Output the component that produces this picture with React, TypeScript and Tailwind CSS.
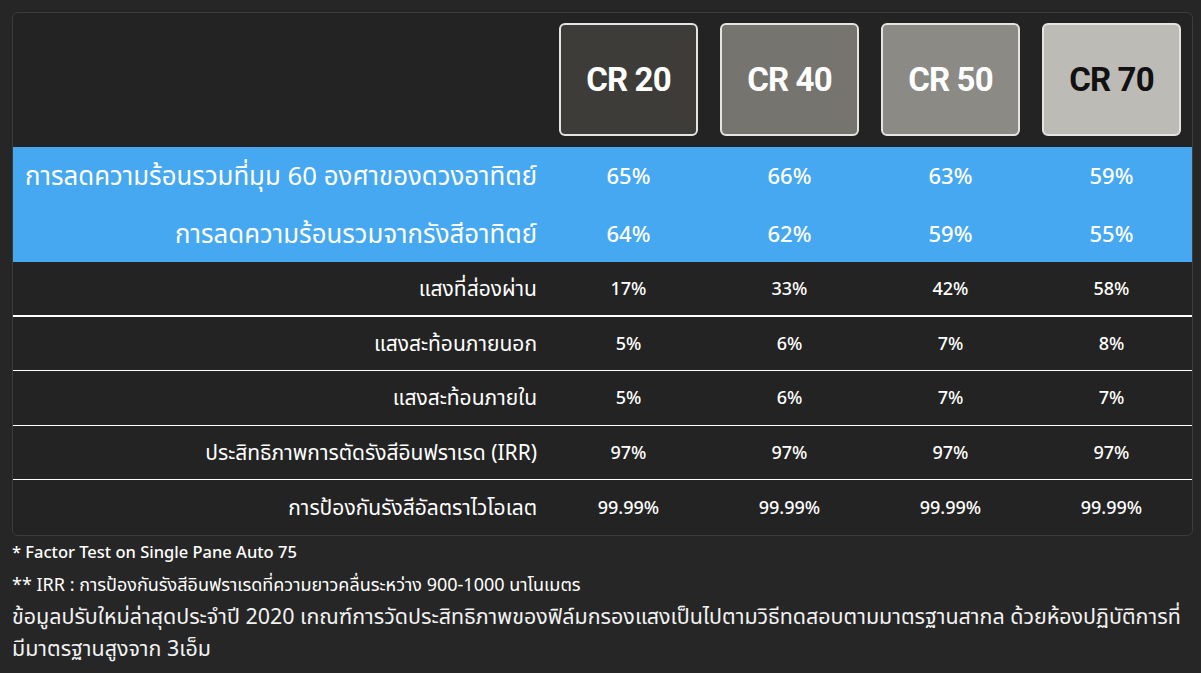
const products = [
  { name: "CR 20", bg: "bg-[#3d3c39]", text: "text-white" },
  { name: "CR 40", bg: "bg-[#75746f]", text: "text-white" },
  { name: "CR 50", bg: "bg-[#8b8a85]", text: "text-white" },
  { name: "CR 70", bg: "bg-[#bcbbb6]", text: "text-[#111]" },
];

const highlightRows = [
  { label: "การลดความร้อนรวมที่มุม 60 องศาของดวงอาทิตย์", values: ["65%", "66%", "63%", "59%"] },
  { label: "การลดความร้อนรวมจากรังสีอาทิตย์", values: ["64%", "62%", "59%", "55%"] },
];

const rows = [
  { label: "แสงที่ส่องผ่าน", values: ["17%", "33%", "42%", "58%"], line: "border-b-2" },
  { label: "แสงสะท้อนภายนอก", values: ["5%", "6%", "7%", "8%"], line: "border-b" },
  { label: "แสงสะท้อนภายใน", values: ["5%", "6%", "7%", "7%"], line: "border-b" },
  { label: "ประสิทธิภาพการตัดรังสีอินฟราเรด (IRR)", values: ["97%", "97%", "97%", "97%"], line: "border-b" },
  { label: "การป้องกันรังสีอัลตราไวโอเลต", values: ["99.99%", "99.99%", "99.99%", "99.99%"], line: "" },
];

const App = () => {
  return (
    <div
      className="min-h-[673px] w-[1201px] bg-[#262626] pt-3 text-white"
      style={{ fontFamily: '"Noto Sans", "Noto Sans Thai", "DejaVu Sans", sans-serif' }}
    >
      {/* Comparison table */}
      <div className="ml-3 w-[1181px] overflow-hidden rounded-[6px] border border-[#3c3c3c] bg-[#232323]">
        <div className="grid h-[134px] grid-cols-[1fr_161px_161px_161px_161px] pt-[10px]">
          <div />
          {products.map((p) => (
            <div key={p.name} className="px-[11px]">
              <div
                className={`flex h-[113px] items-center justify-center rounded-[6px] border-2 border-[#e4e4e2] ${p.bg} ${p.text}`}
              >
                <span className="text-[33px] font-bold tracking-tight" style={{ fontFamily: '"Roboto", sans-serif' }}>
                  {p.name}
                </span>
              </div>
            </div>
          ))}
        </div>

        <div className="bg-[#45a8f0]">
          {highlightRows.map((r) => (
            <div key={r.label} className="grid h-[57.5px] grid-cols-[1fr_161px_161px_161px_161px] items-center">
              <div className="pr-[11px] text-right text-[25.8px]">{r.label}</div>
              {r.values.map((v, i) => (
                <div key={i} className="text-center text-[22px] font-medium">
                  {v}
                </div>
              ))}
            </div>
          ))}
        </div>

        {rows.map((r) => (
          <div
            key={r.label}
            className={`grid h-[54.5px] grid-cols-[1fr_161px_161px_161px_161px] items-center border-white ${r.line}`}
          >
            <div className="pr-[11px] text-right text-[21px]">{r.label}</div>
            {r.values.map((v, i) => (
              <div key={i} className="text-center text-[18px] font-medium">
                {v}
              </div>
            ))}
          </div>
        ))}
      </div>

      {/* Notes */}
      <div className="px-3">
        <p className="text-[16.5px] font-medium leading-[32px]">* Factor Test on Single Pane Auto 75</p>
        <p className="text-[18px] leading-[32px]">
          ** IRR : การป้องกันรังสีอินฟราเรดที่ความยาวคลื่นระหว่าง 900-1000 นาโนเมตร
        </p>
        <p className="text-[21.45px] leading-[32px] text-[#f2f2f2]">
          ข้อมูลปรับใหม่ล่าสุดประจำปี 2020 เกณฑ์การวัดประสิทธิภาพของฟิล์มกรองแสงเป็นไปตามวิธีทดสอบตามมาตรฐานสากล ด้วยห้องปฏิบัติการที่มีมาตรฐานสูงจาก 3เอ็ม
        </p>
      </div>
    </div>
  );
};

export default App;
